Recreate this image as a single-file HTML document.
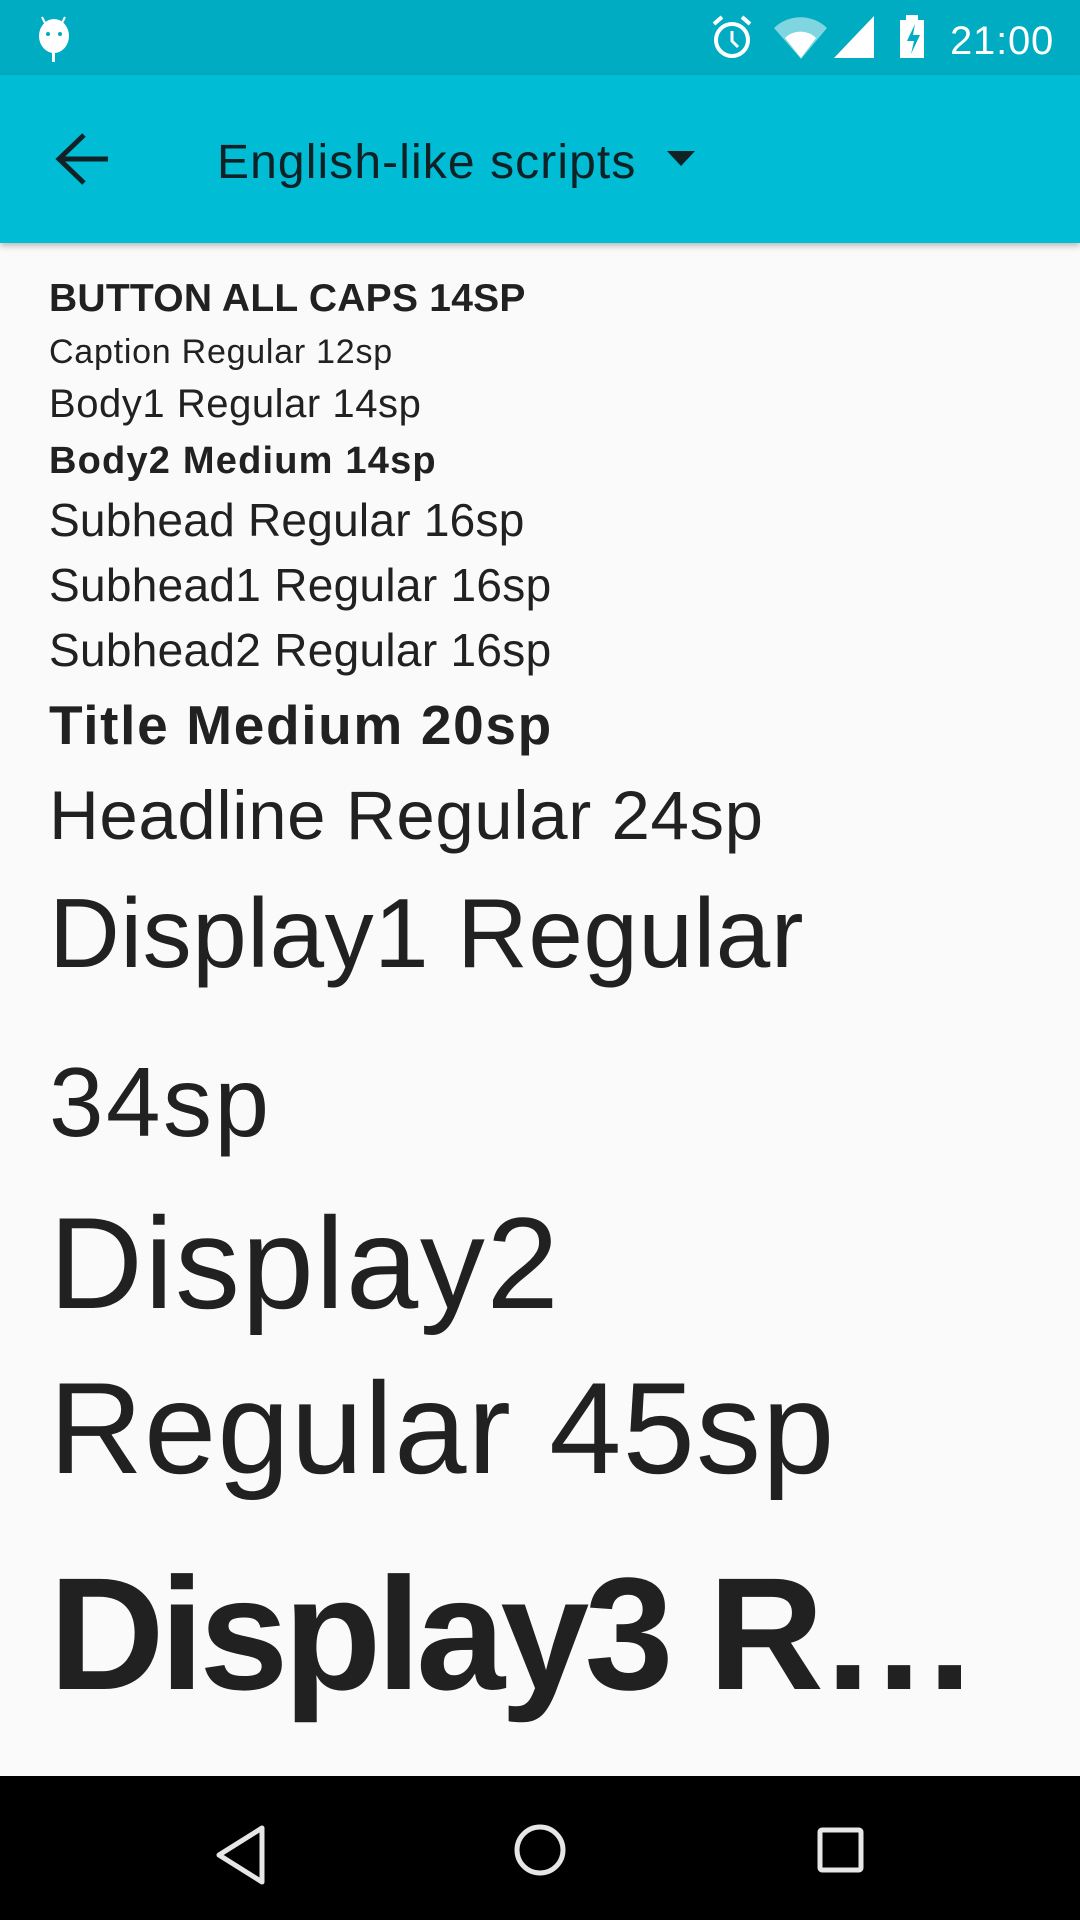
<!DOCTYPE html>
<html><head><meta charset="utf-8"><style>
html,body{margin:0;padding:0}
body{width:1080px;height:1920px;position:relative;overflow:hidden;background:#FAFAFA;font-family:"Liberation Sans",sans-serif;color:#212121}
.t{position:absolute;left:49px;white-space:nowrap;line-height:1}
.b{font-weight:bold}
</style></head><body>
<div style="position:absolute;left:0;top:0;width:1080px;height:75px;background:#00ACC1"></div>
<div style="position:absolute;left:0;top:75px;width:1080px;height:168px;background:#00BCD4;box-shadow:0 3px 6px rgba(0,0,0,0.25)"></div>
<svg style="position:absolute;left:0;top:0" width="1080" height="75">
 <g fill="#fff">
  <ellipse cx="54" cy="36" rx="15" ry="17"/>
  <rect x="52" y="48" width="3" height="14"/>
  <line x1="42" y1="17" x2="45" y2="23" stroke="#fff" stroke-width="2"/>
  <line x1="65" y1="17" x2="62" y2="23" stroke="#fff" stroke-width="2"/>
 </g>
 <circle cx="48" cy="34" r="2" fill="#00ACC1"/><circle cx="60" cy="34" r="2" fill="#00ACC1"/>
 <circle cx="732" cy="40" r="16" fill="none" stroke="#fff" stroke-width="4"/>
 <path d="M732 31v10l6 6" stroke="#fff" stroke-width="3" fill="none"/>
 <path d="M714 24l8-7M750 24l-8-7" stroke="#fff" stroke-width="4"/>
 <path d="M774 28a38 38 0 0 1 53 0l-26 31z" fill="#7fd5e0"/>
 <path d="M785 38a22 22 0 0 1 31 0l-15 20z" fill="#fff"/>
 <path d="M834 58l40-42v42z" fill="#fff"/>
 <rect x="900" y="20" width="24" height="38" fill="#fff"/><rect x="906" y="15" width="12" height="6" fill="#fff"/>
 <path d="M915 24l-8 17h7l-3 13 9-19h-7z" fill="#00ACC1"/>
 <text x="950" y="54" font-family="Liberation Sans" font-size="40" fill="#fff" letter-spacing="0.8">21:00</text>
</svg>
<svg style="position:absolute;left:0;top:75px" width="1080" height="168">
 <path d="M108 84H62M84 60L59 84l25 24" stroke="#102226" stroke-width="5" fill="none"/>
 <text x="217" y="103" font-family="Liberation Sans" font-size="48" fill="#102226" letter-spacing="1.1">English-like scripts</text>
 <path d="M667 76h28l-14 15z" fill="#102226"/>
</svg>
<div class="t b" style="font-size:39px;top:279px;letter-spacing:0.25px">BUTTON ALL CAPS 14SP</div>
<div class="t" style="font-size:34px;top:335px;letter-spacing:0.75px">Caption Regular 12sp</div>
<div class="t" style="font-size:40px;top:384px;letter-spacing:0.55px">Body1 Regular 14sp</div>
<div class="t b" style="font-size:38px;top:442px;letter-spacing:1.2px">Body2 Medium 14sp</div>
<div class="t" style="font-size:46px;top:497px;letter-spacing:0.25px">Subhead Regular 16sp</div>
<div class="t" style="font-size:46px;top:562px;letter-spacing:0.3px">Subhead1 Regular 16sp</div>
<div class="t" style="font-size:46px;top:627px;letter-spacing:0.3px">Subhead2 Regular 16sp</div>
<div class="t b" style="font-size:55px;top:698px;letter-spacing:1.65px">Title Medium 20sp</div>
<div class="t" style="font-size:69px;top:781px;letter-spacing:0.6px">Headline Regular 24sp</div>
<div class="t" style="font-size:98px;top:884px;letter-spacing:0.55px">Display1 Regular</div>
<div class="t" style="font-size:98px;top:1053px;letter-spacing:2.5px">34sp</div>
<div class="t" style="font-size:130px;top:1198px;letter-spacing:1.6px">Display2</div>
<div class="t" style="font-size:130px;top:1363px;letter-spacing:1.1px">Regular 45sp</div>
<div class="t b" style="font-size:160px;top:1554px;letter-spacing:-4.8px">Display3 R…</div>
<div style="position:absolute;left:0;top:1776px;width:1080px;height:144px;background:#000"></div>
<svg style="position:absolute;left:0;top:1776px" width="1080" height="144">
 <path d="M262 106V52l-43 27z" fill="none" stroke="#e6e6e6" stroke-width="5" stroke-linejoin="round"/>
 <circle cx="540" cy="74" r="23" fill="none" stroke="#e6e6e6" stroke-width="5"/>
 <rect x="820" y="54" width="41" height="40" rx="2" fill="none" stroke="#e6e6e6" stroke-width="5"/>
</svg>
</body></html>
